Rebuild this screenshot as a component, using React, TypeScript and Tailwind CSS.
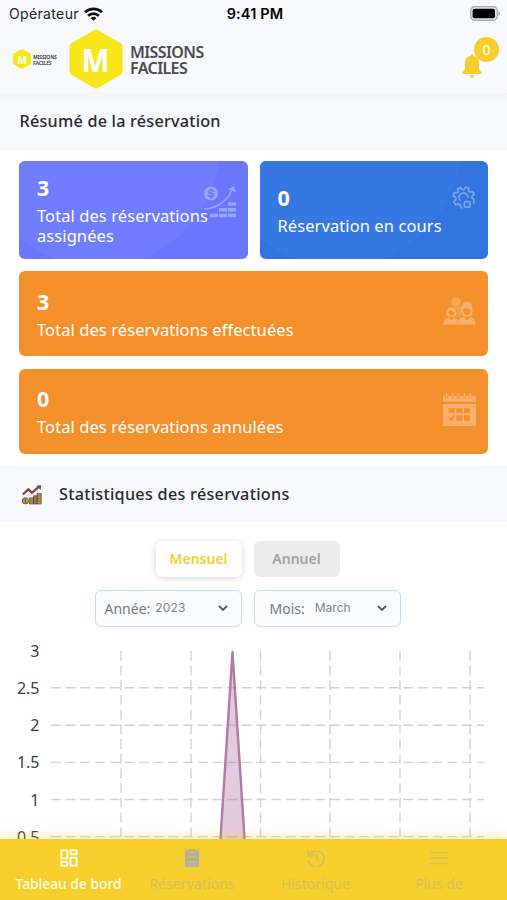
import React, { useState } from "react";
import clsx from "clsx";

interface IconProps {
  className?: string;
}

/*************************************************************
 * Icons
 ************************************************************/
const WifiIcon = ({ className }: IconProps) => (
  <svg viewBox="0 0 18 13" className={className} fill="none" stroke="#111" strokeWidth="2.7">
    <path d="M1 4.8C5.5 0.6 12.5 0.6 17 4.8" />
    <path d="M3.9 8.2C6.8 5.4 11.2 5.4 14.1 8.2" />
    <path d="M6.2 10.2C7.9 8.7 10.1 8.7 11.8 10.2L9 13Z" fill="#111" stroke="none" />
  </svg>
);

const BatteryIcon = ({ className }: IconProps) => (
  <svg viewBox="0 0 31 15" className={className}>
    <rect x="0.7" y="0.7" width="26.6" height="13.6" rx="4" fill="#e3e4e8" stroke="#a5a6a9" strokeWidth="1.2" />
    <rect x="2.6" y="2.8" width="22.4" height="9.4" rx="2" fill="#000" />
    <path d="M28.4 5.2C30.6 6 30.6 9 28.4 9.8Z" fill="#a5a6a9" />
  </svg>
);

const BellIcon = ({ className }: IconProps) => (
  <svg viewBox="0 0 20 24" className={className} fill="#f6cd2b">
    <path d="M10 0C11 0 11.3 0.8 11.4 1.7C15.4 2.6 17 5.6 17 9V15.5L19.6 18.3V20H0.4V18.3L3 15.5V9C3 5.6 4.6 2.6 8.6 1.7C8.7 0.8 9 0 10 0Z" />
    <path d="M7.5 21.3H12.5C12.5 22.8 11.5 23.6 10 23.6S7.5 22.8 7.5 21.3Z" />
  </svg>
);

const GrowthIcon = ({ className }: IconProps) => (
  <svg viewBox="0 0 34 34" className={className} fill="currentColor">
    <path
      fillRule="evenodd"
      d="M8 1.5A7 7 0 1 1 8 15.5A7 7 0 1 1 8 1.5ZM7.3 3.2V4.4C4 5 4.2 8.5 7 9C9.5 9.5 9.3 10.5 8 10.7C6.8 10.8 6.2 10.2 6 9.5L4.3 10C4.6 11.3 5.8 12.2 7.3 12.4V13.8H8.9V12.3C12.2 11.7 12 8 9 7.4C6.6 7 6.6 6 8 5.9C9 5.8 9.7 6.3 9.9 7L11.5 6.4C11.1 5.2 10.2 4.6 8.9 4.4V3.2Z"
    />
    <path d="M1 24C14 23.5 24 16 28.6 5.5" fill="none" stroke="currentColor" strokeWidth="1.6" />
    <path d="M24.8 4.6L31 1L33 7.4L30.6 6.3L28.8 5.5Z" />
    <path d="M25 17.2h8v3.6h-8zM16 23h8v3.6h-8zM25 23h8v3.6h-8zM7 28.7h8v3.6h-8zM16 28.7h8v3.6h-8zM25 28.7h8v3.6h-8z" />
  </svg>
);

const GearIcon = ({ className }: IconProps) => (
  <svg viewBox="0 0 24 24" className={className} fill="none" stroke="currentColor" strokeWidth="1.8" strokeLinejoin="round">
    <path d="M11 22.6H9.2L8.6 19.6L6.8 18.6L4 19.6L2 16.4L4 14.2V12L1.2 10.4L2.4 6.8L5.4 7L6.6 5.6L6 3L9 1.6L10.8 3.8H12.6L14.2 1.2L17.4 2.4V5.2L18.8 6.4L21.6 5.8L23 9L20.8 11V12.4L22.8 14V18.6" />
    <path d="M8.8 15.6A4.8 4.8 0 1 1 16.8 12.4" />
    <rect x="13" y="16.2" width="5.8" height="5.8" rx="1" />
  </svg>
);

const UsersIcon = ({ className }: IconProps) => (
  <svg viewBox="0 0 32 28" className={className} fill="currentColor">
    <circle cx="12.5" cy="5" r="4.8" opacity="0.7" />
    <path
      fillRule="evenodd"
      d="M2.8 18C2.6 12.8 4.6 10.2 8 10.2S13.3 12.8 13.1 18C11.5 20.5 4.5 20.5 2.8 18ZM5 14.8C5 20.2 11 20.2 11 14.8C9 14.6 7.6 14 6.8 13.2Z"
    />
    <path
      fillRule="evenodd"
      d="M18 17.8C16.5 8.5 19 4.6 23.4 4.6S30 9 28.8 17.8C26.5 20.5 20.5 20.5 18 17.8ZM19.6 12.8C19.6 20 27.2 20 27.2 12.8C25.5 11.6 23 11.2 20.8 11.2Z"
    />
    <path d="M0 27.5C0 22.8 2 21.3 5.2 20.7L8 23.4L10.8 20.7C12.6 21 14 21.9 14.6 23.4L13.4 27.5ZM14.2 27.5C14.4 22.2 16.4 20.6 20 20L23.4 23.6L26.8 20C30.2 20.8 31.8 22.6 32 27.5Z" />
    <path d="M11.5 11.2C13.7 9.5 15.8 9 17.4 10L17.6 19.3L14 20.5C14.8 14.8 13.8 12.2 11.5 11.2Z" opacity="0.55" />
  </svg>
);

const CalendarIcon = ({ className }: IconProps) => (
  <svg viewBox="0 0 32 32" className={className} fill="currentColor">
    <path d="M0 2.6H2.3V5.2H4.6V2.6H8V5.2H10.3V2.6H13.7V5.2H16V2.6H19.4V5.2H21.7V2.6H25.1V5.2H27.4V2.6H32V8.4H0Z" />
    <path
      fillRule="evenodd"
      d="M0 10.6H32V32H0ZM5.6 14.8V19.2H11.2V14.8ZM13 14.8V19.2H18.6V14.8ZM20.4 14.8V19.2H26V14.8ZM5.6 24.6L8 27.4L11.7 22.4L10.2 21.2L8 24.3L7 23.4ZM13 21.6V27H18.6V21.6ZM20.4 21.6V27H26V21.6Z"
    />
    <path d="M2.8 0h1.4v4H2.8zM8.5 0h1.4v4H8.5zM14.2 0h1.4v4h-1.4zM19.9 0h1.4v4h-1.4zM25.6 0H27v4h-1.4z" />
  </svg>
);

const StatsIcon = ({ className }: IconProps) => (
  <svg viewBox="0 0 20 20" className={className}>
    <path d="M0.8 9.5L6.3 4.4L10 7.8L17 1.7" fill="none" stroke="#8f3f45" strokeWidth="2.3" />
    <path d="M14.3 0.6L19.2 0.3L18.7 5Z" fill="#8f3f45" />
    <circle cx="3.4" cy="15.8" r="3.1" fill="#b39a55" stroke="#5c5340" strokeWidth="0.9" />
    <path d="M3.4 14V17.6" stroke="#5c5340" />
    <rect x="7.6" y="12.9" width="4" height="6" fill="#c39c45" stroke="#5c4d35" strokeWidth="0.8" />
    <rect x="11.6" y="10.8" width="3.6" height="8.1" fill="#8f7850" stroke="#5c4d35" strokeWidth="0.8" />
    <rect x="15.2" y="8.5" width="3.9" height="10.4" fill="#c39c45" stroke="#5c4d35" strokeWidth="0.8" />
    <path d="M7.6 15H11.6M7.6 17H11.6M15.2 11H19M15.2 13.5H19M15.2 16H19" stroke="#5c4d35" strokeWidth="0.6" />
  </svg>
);

const ChevronIcon = ({ className }: IconProps) => (
  <svg viewBox="0 0 10 7" className={className} fill="none" stroke="#555" strokeWidth="1.8">
    <path d="M1 1L5 5L9 1" />
  </svg>
);

const DashboardIcon = ({ className }: IconProps) => (
  <svg viewBox="0 0 18 18" className={className} fill="none" stroke="currentColor" strokeWidth="1.9">
    <path d="M1.4 1.4h6v8h-6zM10.6 1.4h6v3.8h-6zM1.4 12.8h6v3.8h-6zM10.6 8.6h6v8h-6z" />
  </svg>
);

const ClipboardIcon = ({ className }: IconProps) => (
  <svg viewBox="0 0 14 18" className={className}>
    <path d="M2 1H4.5L5 0H9L9.5 1H12A2 2 0 0 1 14 3V16A2 2 0 0 1 12 18H2A2 2 0 0 1 0 16V3A2 2 0 0 1 2 1Z" fill="#b2b19c" />
    <path d="M4 3.2H10M3 8H11M3 13H11" stroke="#d2bf62" strokeWidth="1.4" />
  </svg>
);

const HistoryIcon = ({ className }: IconProps) => (
  <svg viewBox="0 0 18 18" className={className} fill="none" stroke="currentColor" strokeWidth="1.7">
    <path d="M1.5 7.3A8 8 0 1 1 1.2 11M1 1.5L1.5 7.3L7 6.2M1.5 7L5 3.5" />
    <path d="M9.4 5V9.6L12.2 11.2" />
  </svg>
);

const MenuIcon = ({ className }: IconProps) => (
  <svg viewBox="0 0 18 14" className={className} stroke="currentColor" strokeWidth="1.6">
    <path d="M0.5 1.5H17.5M0.5 7H17.5M0.5 12.5H17.5" />
  </svg>
);

/*************************************************************
 * Header
 ************************************************************/
const StatusBar = () => (
  <div className="grid h-7 grid-cols-3 items-center pb-px pl-[9px] pr-[6px] font-['Inter'] text-[14px] text-[#222]">
    <div className="flex items-center gap-[5px]">
      <span className="tracking-[0.35px]">Opérateur</span>
      <WifiIcon className="h-[14px] w-[19px]" />
    </div>
    <div className="text-center text-[14.5px] font-semibold tracking-[0.15px] text-black">9:41 PM</div>
    <BatteryIcon className="h-[15px] w-[31px] justify-self-end" />
  </div>
);

const Hexagon = ({ className }: IconProps) => (
  <svg viewBox="0 0 54 60" className={className} fill="#f8e51a">
    <path d="M27 0.5Q28 0.5 29 1.1L52 14.4Q53.5 15.3 53.5 17V43Q53.5 44.7 52 45.6L29 58.9Q27 60 25 58.9L2 45.6Q0.5 44.7 0.5 43V17Q0.5 15.3 2 14.4L25 1.1Q26 0.5 27 0.5Z" />
  </svg>
);

const Header = () => (
  <header className="h-[93px] shrink-0 bg-[#f8f9fd]">
    <StatusBar />
    <div className="flex items-start pl-[13px] font-['Noto_Sans'] font-bold text-[#4b4a4e]">
      <div className="mt-[21px] grid h-5 w-[18px] place-items-center">
        <Hexagon className="col-start-1 row-start-1 h-5 w-[18px]" />
        <span className="col-start-1 row-start-1 scale-x-90 text-[11px] leading-none text-white">M</span>
      </div>
      <div className="ml-[2px] mt-[26px] w-[25px] whitespace-pre-line text-[5px] leading-[6px] tracking-[-0.15px]">
        {"MISSIONS\nFACILES"}
      </div>
      <div className="ml-[11px] mt-[1px] grid h-[60px] w-[54px] place-items-center">
        <Hexagon className="col-start-1 row-start-1 h-[60px] w-[54px]" />
        <span className="col-start-1 row-start-1 scale-x-90 text-[33px] leading-none text-white">M</span>
      </div>
      <div className="ml-[7px] mt-[17px] whitespace-pre-line text-[16px] font-semibold leading-[15.5px] tracking-[-0.6px]">
        {"MISSIONS\nFACILES"}
      </div>
      <div className="relative ml-auto mr-[25px] mt-[26px]">
        <BellIcon className="h-6 w-5" />
        <span className="absolute -top-[17px] left-[12px] flex h-[25px] w-[25px] items-center justify-center rounded-full bg-[#f6cd2b] text-[14px] font-normal text-white">
          0
        </span>
      </div>
    </div>
  </header>
);

/*************************************************************
 * Summary cards
 ************************************************************/
interface StatCardProps {
  value: number;
  label: string;
  className: string;
  children: React.ReactNode;
}

const StatCard = ({ value, label, className, children }: StatCardProps) => (
  <div className={clsx("relative flex flex-col justify-center overflow-hidden rounded-[6px] pl-[18px] text-white", className)}>
    <div className="relative z-10 mb-1 text-[21.5px] font-bold leading-7">{value}</div>
    <div className="relative z-10 w-[300px] whitespace-pre-line text-[16.5px] leading-[20px] tracking-[0.08px]">{label}</div>
    {children}
  </div>
);

const Summary = () => (
  <section className="grid shrink-0 grid-cols-2 gap-x-[12px] gap-y-[12.5px] px-[19px] pb-3 pt-[11px]">
    <StatCard value={3} label={"Total des réservations\nassignées"} className="h-[97.5px] bg-[#6877fd]">
      <div className="absolute -left-[43px] -top-[138px] h-[244px] w-[244px] rounded-full bg-[#707dfe]" />
      <GrowthIcon className="absolute right-[11px] top-[24px] h-[34px] w-[34px] text-[#9ba5ff]" />
    </StatCard>
    <StatCard value={0} label="Réservation en cours" className="h-[97.5px] bg-[#3174df]">
      <div className="absolute -left-[43px] -top-[138px] h-[244px] w-[244px] rounded-full bg-[#3578e1]" />
      <GearIcon className="absolute right-[13px] top-[25px] h-[23px] w-[23px] text-[#7aa4ec]" />
    </StatCard>
    <StatCard value={3} label="Total des réservations effectuées" className="col-span-2 h-[85px] bg-[#f4902b]">
      <UsersIcon className="absolute right-[12px] top-[26px] h-[28px] w-[33px] text-[#f8b16c]" />
    </StatCard>
    <StatCard value={0} label="Total des réservations annulées" className="col-span-2 h-[85.5px] bg-[#f4902b]">
      <CalendarIcon className="absolute right-[12px] top-[24px] h-[33px] w-[33px] text-[#f8b16c]" />
    </StatCard>
  </section>
);

/*************************************************************
 * Chart
 ************************************************************/
const yTicks = [
  { label: "3", y: 11 },
  { label: "2.5", y: 47.8 },
  { label: "2", y: 85.2 },
  { label: "1.5", y: 122.4 },
  { label: "1", y: 159.5 },
  { label: "0.5", y: 196.6 },
];
const xLines = [121, 191, 260.5, 330, 400, 470];

const BookingChart = () => (
  <svg viewBox="0 0 507 260" className="h-[260px] w-[507px] shrink-0">
    <g stroke="#d0d2d4" strokeWidth="1.4" strokeDasharray="9.8 4.88">
      {yTicks.slice(1).map(tick => (
        <path key={tick.label} d={`M51 ${tick.y}H484`} />
      ))}
      {xLines.map(x => (
        <path key={x} d={`M${x} 11V234`} />
      ))}
    </g>
    <path d="M218.2 234L232.5 12L246.8 234Z" fill="#a55b94" fillOpacity="0.32" stroke="#b078a3" strokeWidth="2.4" strokeLinejoin="round" />
    <g fill="#3c3c3c" fontSize="16" textAnchor="end">
      {yTicks.map(tick => (
        <text key={tick.label} x="39.5" y={tick.y + 6}>
          {tick.label}
        </text>
      ))}
    </g>
  </svg>
);

const Statistics = () => {
  const [period, setPeriod] = useState("Mensuel");

  return (
    <section className="flex flex-col items-center pt-[19px]">
      <div className="mr-[12px] flex gap-[12px]">
        {["Mensuel", "Annuel"].map(item => (
          <button
            key={item}
            onClick={() => setPeriod(item)}
            className={clsx(
              "h-9 w-[86px] rounded-[6px] pb-px text-[14px] font-semibold",
              period == item ? "bg-white text-[#f4ce35] shadow-[0_1px_6px_rgba(0,0,0,0.18)]" : "bg-[#ebebeb] text-[#a3a3a3]",
            )}
          >
            {item}
          </button>
        ))}
      </div>
      <div className="mr-[12px] mt-[13px] flex gap-[12px]">
        <div className="flex h-[37px] w-[147px] items-center rounded-[6px] border border-[#c0dff8] bg-[#fafbfc] pb-px pl-[9px] pr-[13px] text-[14px] text-[#777]">
          Année:
          <span className="ml-[5px] font-['Inter'] text-[12px] tracking-[0.15px] text-[#858585]">2023</span>
          <ChevronIcon className="ml-auto h-[7px] w-[10px]" />
        </div>
        <div className="flex h-[37px] w-[147px] items-center rounded-[6px] border border-[#c0dff8] bg-[#fafbfc] pb-px pl-[15px] pr-[13px] text-[14px] text-[#777]">
          Mois:
          <span className="ml-[10px] font-['Inter'] text-[12px] text-[#858585]">March</span>
          <ChevronIcon className="ml-auto h-[7px] w-[10px]" />
        </div>
      </div>
      <div className="mt-[13px]">
        <BookingChart />
      </div>
    </section>
  );
};

/*************************************************************
 * Bottom navigation
 ************************************************************/
const BottomNav = () => (
  <nav className="relative grid h-[61px] shrink-0 grid-cols-[137px_110px_137px_110px] bg-[#f6cf2d] text-[14px] text-[#d4bf5c] shadow-[0_-3px_12px_rgba(246,207,45,0.35)]">
    <div className="flex flex-col items-center pt-[10px] text-[13.8px] font-medium text-[#fffbe8]">
      <DashboardIcon className="h-[18px] w-[18px]" />
      <span className="mt-[7px] leading-5">Tableau de bord</span>
    </div>
    <div className="flex flex-col items-center pt-[10px]">
      <ClipboardIcon className="h-[18px] w-[14px]" />
      <span className="mt-[7px] leading-5 tracking-[0.1px]">Réservations</span>
    </div>
    <div className="flex flex-col items-center pt-[10px]">
      <HistoryIcon className="h-[18px] w-[18px]" />
      <span className="mt-[7px] leading-5">Historique</span>
    </div>
    <div className="flex flex-col items-center pt-[10px]">
      <MenuIcon className="my-[2px] h-[14px] w-[18px]" />
      <span className="mt-[7px] leading-5">Plus de</span>
    </div>
  </nav>
);

const App = () => (
  <div className="flex h-[900px] w-[507px] flex-col overflow-hidden bg-white font-['Noto_Sans',sans-serif]">
    <Header />
    <main className="min-h-0 flex-1 overflow-hidden">
      <h2 className="flex h-[57px] items-center bg-[#f7f8fc] bg-linear-to-b from-[#f3f4f1] to-[#f7f8fc] to-20% pb-px pl-[19.5px] text-[16.2px] font-medium tracking-[0.22px] text-[#2a2a2e]">
        Résumé de la réservation
      </h2>
      <Summary />
      <h2 className="flex h-[56px] items-center bg-[#f7f8fc] pl-[22px] pt-px text-[16.2px] font-medium tracking-[0.28px] text-[#2a2a2e]">
        <StatsIcon className="mr-[17px] h-5 w-5" />
        Statistiques des réservations
      </h2>
      <Statistics />
    </main>
    <BottomNav />
  </div>
);

export default App;
